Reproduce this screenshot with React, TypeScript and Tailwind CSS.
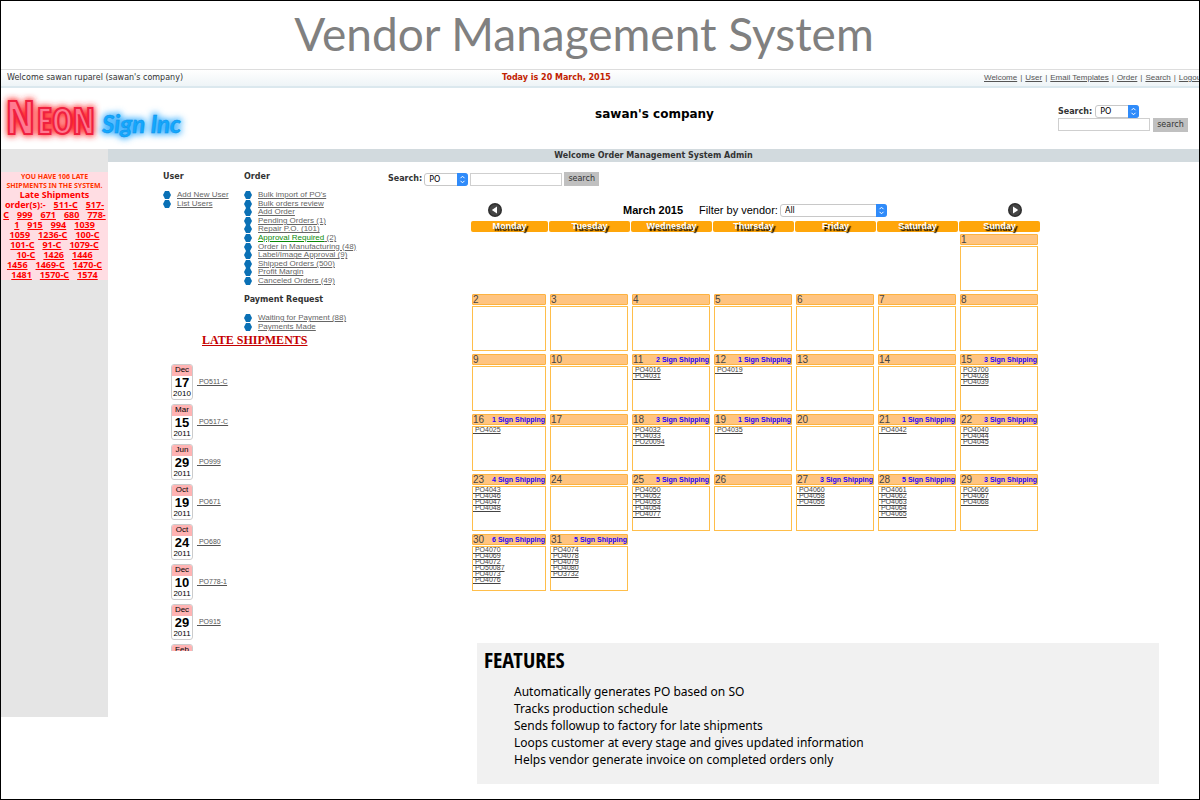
import { useState } from "react";

const navLinks = ["Welcome", "User", "Email Templates", "Order", "Search", "Logout"];

const userLinks = ["Add New User", "List Users"];

const orderLinks = [
  "Bulk import of PO's",
  "Bulk orders review",
  "Add Order",
  "Pending Orders (1)",
  "Repair P.O. (101)",
  "Approval Required (2)",
  "Order in Manufacturing (48)",
  "Label/Image Approval (9)",
  "Shipped Orders (500)",
  "Profit Margin",
  "Canceled Orders (49)",
];

const paymentLinks = ["Waiting for Payment (88)", "Payments Made"];

// One entry per line of the alert; a trailing dash carries on to the next line
const lateOrders = [
  ["511-C", "517-"],
  ["C", "999", "671", "680", "778-"],
  ["1", "915", "994", "1039"],
  ["1059", "1236-C", "100-C"],
  ["101-C", "91-C", "1079-C"],
  ["10-C", "1426", "1446"],
  ["1456", "1469-C", "1470-C"],
  ["1481", "1570-C", "1574"],
];

const lateShipments = [
  { month: "Dec", day: 17, year: 2010, po: "PO511-C" },
  { month: "Mar", day: 15, year: 2011, po: "PO517-C" },
  { month: "Jun", day: 29, year: 2011, po: "PO999" },
  { month: "Oct", day: 19, year: 2011, po: "PO671" },
  { month: "Oct", day: 24, year: 2011, po: "PO680" },
  { month: "Dec", day: 10, year: 2011, po: "PO778-1" },
  { month: "Dec", day: 29, year: 2011, po: "PO915" },
  { month: "Feb", day: 1, year: 2012, po: "PO994" },
];

const weekdays = ["Monday", "Tuesday", "Wednesday", "Thursday", "Friday", "Saturday", "Sunday"];

const weeks = [
  [0, 0, 0, 0, 0, 0, 1],
  [2, 3, 4, 5, 6, 7, 8],
  [9, 10, 11, 12, 13, 14, 15],
  [16, 17, 18, 19, 20, 21, 22],
  [23, 24, 25, 26, 27, 28, 29],
  [30, 31, 0, 0, 0, 0, 0],
];

const shipping: Record<number, string[]> = {
  11: ["PO4016", "PO4031"],
  12: ["PO4019"],
  15: ["PO3700", "PO4028", "PO4039"],
  16: ["PO4025"],
  18: ["PO4032", "PO4033", "PO20094"],
  19: ["PO4035"],
  21: ["PO4042"],
  22: ["PO4040", "PO4044", "PO4045"],
  23: ["PO4043", "PO4046", "PO4047", "PO4048"],
  25: ["PO4050", "PO4052", "PO4053", "PO4054", "PO4077"],
  27: ["PO4060", "PO4058", "PO4056"],
  28: ["PO4061", "PO4062", "PO4063", "PO4064", "PO4065"],
  29: ["PO4066", "PO4067", "PO4068"],
  30: ["PO4070", "PO4069", "PO4072", "PO50087", "PO4073", "PO4076"],
  31: ["PO4074", "PO4078", "PO4079", "PO4080", "PO3732"],
};

const features = [
  "Automatically generates PO based on SO",
  "Tracks production schedule",
  "Sends followup to factory for late shipments",
  "Loops customer at every stage and gives updated information",
  "Helps vendor generate invoice on completed orders only",
];

function Logo() {
  return (
    <svg width="196" height="60" viewBox="0 0 196 60" role="img" aria-label="Neon Sign Inc">
      <defs>
        <filter id="glow" x="-20%" y="-40%" width="140%" height="180%">
          <feGaussianBlur stdDeviation="3" />
        </filter>
      </defs>
      <g fontFamily="'Open Sans Condensed', 'Open Sans', sans-serif" fontWeight="300">
        <g filter="url(#glow)" fill="#ff2a2a" stroke="#ff2a2a" strokeWidth="4">
          <text x="5" y="46" fontSize="46">N</text>
          <text x="36" y="46" fontSize="35">EON</text>
        </g>
        <g fill="#ff7a90" stroke="#f0203f" strokeWidth="2">
          <text x="5" y="46" fontSize="46">N</text>
          <text x="36" y="46" fontSize="35">EON</text>
        </g>
      </g>
      <g fontFamily="Lato, sans-serif" fontStyle="italic" fontWeight="700" fontSize="24">
        <text x="101" y="45" filter="url(#glow)" fill="#4db8ff" stroke="#4db8ff" strokeWidth="4">
          Sign Inc
        </text>
        <text x="101" y="45" fill="#12a8fd" stroke="#1190ea" strokeWidth="0.5">
          Sign Inc
        </text>
      </g>
    </svg>
  );
}

function Select({ id, label, options, className }: { id: string; label: string; options: string[]; className: string }) {
  return (
    <span className={`relative inline-block h-[13px] ${className}`}>
      <select
        id={id}
        aria-label={label}
        className="block h-full w-full appearance-none rounded-[3px] border border-[#c8c8c8] bg-white pl-1 font-['DejaVu_Sans'] text-[8px] leading-[11px] text-black"
      >
        {options.map((o) => (
          <option key={o}>{o}</option>
        ))}
      </select>
      <svg className="pointer-events-none absolute right-0 top-0" width="11" height="13" viewBox="0 0 11 13">
        <path d="M0 0h8a3 3 0 0 1 3 3v7a3 3 0 0 1-3 3H0z" fill="#2f8bfa" />
        <path d="M3.5 5.2 5.5 3.2 7.5 5.2M3.5 7.8 5.5 9.8 7.5 7.8" fill="none" stroke="#fff" strokeWidth="1" />
      </svg>
    </span>
  );
}

function SearchField({ id }: { id: string }) {
  return (
    <>
      <input id={id} aria-label="Search text" className="h-[13px] w-[92px] border border-[#cfcfcf] bg-white px-1 text-[8px]" />
      <button className="h-[14px] w-[35px] bg-[#c0c0c0] text-[8px] leading-[14px] text-[#333]">search</button>
    </>
  );
}

function MenuList({ items, className }: { items: string[]; className: string }) {
  return (
    <ul className={`flex flex-col justify-between font-['Liberation_Sans'] text-[8px] leading-[8px] text-[#666] ${className}`}>
      {items.map((item) => (
        <li key={item} className="flex items-center gap-[6px]">
          <svg width="8" height="8" viewBox="0 0 8 8">
            <path d="M2 0h4l2 4-2 4H2L0 4z" fill="#0a70b5" />
          </svg>
          <a href="#" className="whitespace-nowrap underline">
            {item.startsWith("Approval") ? (
              <>
                <span className="text-[#0a8a0a] underline">Approval Required</span> (2)
              </>
            ) : (
              item
            )}
          </a>
        </li>
      ))}
    </ul>
  );
}

function ArrowButton({ dir }: { dir: "prev" | "next" }) {
  return (
    <button aria-label={dir === "prev" ? "Previous month" : "Next month"}>
      <svg width="14" height="14" viewBox="0 0 14 14">
        <circle cx="7" cy="7" r="7" fill="#2f2f2f" />
        <circle cx="7" cy="7" r="5.5" fill="#454545" />
        <path d={dir === "prev" ? "M9 3.5v7L3.8 7z" : "M5 3.5v7L10.2 7z"} fill="#fff" />
      </svg>
    </button>
  );
}

function DayCell({ day }: { day: number }) {
  const orders = shipping[day];
  return (
    <td className="h-[60px] pl-px pr-[3px] align-top">
      {day > 0 && (
        <>
          <div className="flex h-[11px] items-center justify-between rounded-[1px] border border-[#fdb340] bg-[#ffc480] text-[10px] leading-[9px] text-[#444]">
            <span>{day}</span>
            {orders && (
              <span className="whitespace-nowrap text-[7px] font-bold text-[#2200ff]">{orders.length} Sign Shipping</span>
            )}
          </div>
          <div className="mt-px h-[45px] border border-[#ffbe4a]">
            {orders && (
              <ul className="text-[7px] leading-[6px] text-[#444]">
                {orders.map((po) => (
                  <li key={po}>
                    <a href="#" className="block w-fit whitespace-pre underline">
                      {" "}
                      {po}
                    </a>
                  </li>
                ))}
              </ul>
            )}
          </div>
        </>
      )}
    </td>
  );
}

function Calendar() {
  const [month] = useState("March 2015");

  return (
    <section className="w-full max-w-[570px] font-['Liberation_Sans']">
      <div className="flex h-[18px] items-center pl-[17px] pr-[19px]">
        <ArrowButton dir="prev" />
        <h2 className="ml-auto text-[11px] font-bold text-black">{month}</h2>
        <label htmlFor="vendor" className="ml-4 mr-[2px] text-[11px] text-black">
          Filter by vendor:
        </label>
        <Select id="vendor" label="Filter by vendor" options={["All"]} className="w-[107px]" />
        <span className="ml-auto flex">
          <ArrowButton dir="next" />
        </span>
      </div>
      <table className="mt-[2px] w-full table-fixed border-collapse">
        <colgroup>
          <col className="w-[78px]" />
          <col span={6} />
        </colgroup>
        <thead>
          <tr>
            {weekdays.map((name) => (
              <th key={name} className="pb-[2px] pr-px">
                <div className="h-[11px] rounded-[2px] bg-[#ffa60a] text-[9px] leading-[11px] text-white [text-shadow:2px_2px_1px_#000]">
                  {name}
                </div>
              </th>
            ))}
          </tr>
        </thead>
        <tbody>
          {weeks.map((week, i) => (
            <tr key={i}>
              {week.map((day, j) => (
                <DayCell key={j} day={day} />
              ))}
            </tr>
          ))}
        </tbody>
      </table>
    </section>
  );
}

function LateAlert() {
  return (
    <div className="overflow-hidden whitespace-pre bg-[#ffdde3] text-center font-['Noto_Sans'] font-bold">
      <p className="text-[7px] leading-[9px] text-[#ff3300]">
        YOU HAVE 106 LATE
        <br />
        SHIPMENTS IN THE SYSTEM.
      </p>
      <p className="text-[9px] leading-[10px] text-[#f00]">Late Shipments</p>
      {lateOrders.map((line, i) => (
        <p key={i} className="flex justify-center gap-2 text-[9px] leading-[10px] text-[#f00]">
          {i === 0 && <span>order(s):-</span>}
          {line.map((id) => (
            <a key={id} href="#" className="underline">
              {id}
            </a>
          ))}
        </p>
      ))}
    </div>
  );
}

function LateShipments() {
  return (
    <section>
      <h2 className="ml-[39px] font-['Liberation_Serif'] text-[12px] font-bold leading-[14px] text-[#c40000] underline">
        LATE SHIPMENTS
      </h2>
      <ul className="ml-2 mt-[17px] h-[287px] overflow-hidden font-['Liberation_Sans']">
        {lateShipments.map((s) => (
          <li key={s.po} className="mb-1 flex h-9 items-center gap-1">
            <div className="h-9 w-[22px] overflow-hidden rounded-[3px] border border-[#ccc] text-center text-black">
              <div className="h-[11px] bg-[#ffb3b3] text-[8px] leading-[10px]">{s.month}</div>
              <div className="text-[13px] font-bold leading-[14px]">{s.day}</div>
              <div className="text-[8px] leading-[8px]">{s.year}</div>
            </div>
            <a href="#" className="whitespace-pre text-[7px] text-[#555] underline">
              {" "}
              {s.po}
            </a>
          </li>
        ))}
      </ul>
    </section>
  );
}

export default function App() {
  return (
    <div className="min-h-screen overflow-hidden border border-black bg-white font-['DejaVu_Sans',sans-serif] text-[8px] text-[#333]">
      <h1 className="h-[68px] pr-[32px] text-center font-['Lato',sans-serif] text-[46px] leading-[66px] text-[#808080]">
        Vendor Management System
      </h1>

      {/* Top bar */}
      <div className="grid h-[19px] grid-cols-[501px_1fr_215px] items-center border-b-2 border-t border-b-[#dbe8ee] border-t-[#ddd] bg-linear-to-b from-white to-[#eef4f7] leading-[16px]">
        <span className="pl-[6px]">Welcome sawan ruparel (sawan's company)</span>
        <span className="font-bold text-[#c22200]">Today is 20 March, 2015</span>
        <nav className="flex gap-[3px] whitespace-nowrap font-['Liberation_Sans'] text-[#555]">
          {navLinks.map((link, i) => (
            <span key={link} className="flex gap-[3px]">
              {i > 0 && <span>|</span>}
              <a href="#" className="underline">
                {link}
              </a>
            </span>
          ))}
        </nav>
      </div>

      <header className="grid h-[61px] grid-cols-[250px_1fr_141px] items-start">
        <Logo />
        <h2 className="pt-[17px] text-center text-[12px] font-bold leading-[18px] text-black">sawan's company</h2>
        <form className="pt-[17px]" onSubmit={(e) => e.preventDefault()}>
          <div className="flex items-center gap-[3px]">
            <label htmlFor="top-type" className="font-bold">
              Search:
            </label>
            <Select id="top-type" label="Search type" options={["PO"]} className="w-11" />
          </div>
          <div className="flex gap-[3px]">
            <SearchField id="top-query" />
          </div>
        </form>
      </header>

      <div className="flex">
        <aside className="h-[568px] w-[107px] shrink-0 bg-[#e5e5e5] pt-[23px]">
          <LateAlert />
        </aside>

        <div className="min-w-0 flex-1">
          <div className="h-[13px] bg-[#d2dade] text-center font-bold leading-[13px]">Welcome Order Management System Admin</div>

          <div className="flex">
            <div className="ml-[55px] w-[225px] shrink-0 pt-[10px]">
              <div className="flex">
                <section className="w-[81px]">
                  <h3 className="font-bold leading-[10px]">User</h3>
                  <MenuList items={userLinks} className="mt-[9px] h-[17px]" />
                </section>
                <section>
                  <h3 className="font-bold leading-[10px]">Order</h3>
                  <MenuList items={orderLinks} className="mt-[9px] h-[94px]" />
                  <h3 className="mt-[10px] font-bold leading-[10px]">Payment Request</h3>
                  <MenuList items={paymentLinks} className="mb-[2px] mt-[9px] h-[17px]" />
                </section>
              </div>
              <LateShipments />
            </div>

            <div className="min-w-0 flex-1 pt-[10px]">
              <form className="flex items-center gap-[2px]" onSubmit={(e) => e.preventDefault()}>
                <label htmlFor="type" className="font-bold">
                  Search:
                </label>
                <Select id="type" label="Search type" options={["PO"]} className="w-11" />
                <SearchField id="query" />
              </form>

              <div className="ml-[83px] mt-[15px]">
                <Calendar />
              </div>

              <section className="ml-[89px] mr-10 mt-[49px] h-[141px] bg-[#f1f1f1] pl-[7px] pt-1 text-black">
                <h2 className="font-['Open_Sans_Condensed','Open_Sans'] text-[22px] font-bold leading-[24px]">FEATURES</h2>
                <ul className="ml-[30px] mt-3 font-['Noto_Sans',sans-serif] text-[12px] leading-[17px]">
                  {features.map((f) => (
                    <li key={f}>{f}</li>
                  ))}
                </ul>
              </section>
            </div>
          </div>
        </div>
      </div>
    </div>
  );
}
